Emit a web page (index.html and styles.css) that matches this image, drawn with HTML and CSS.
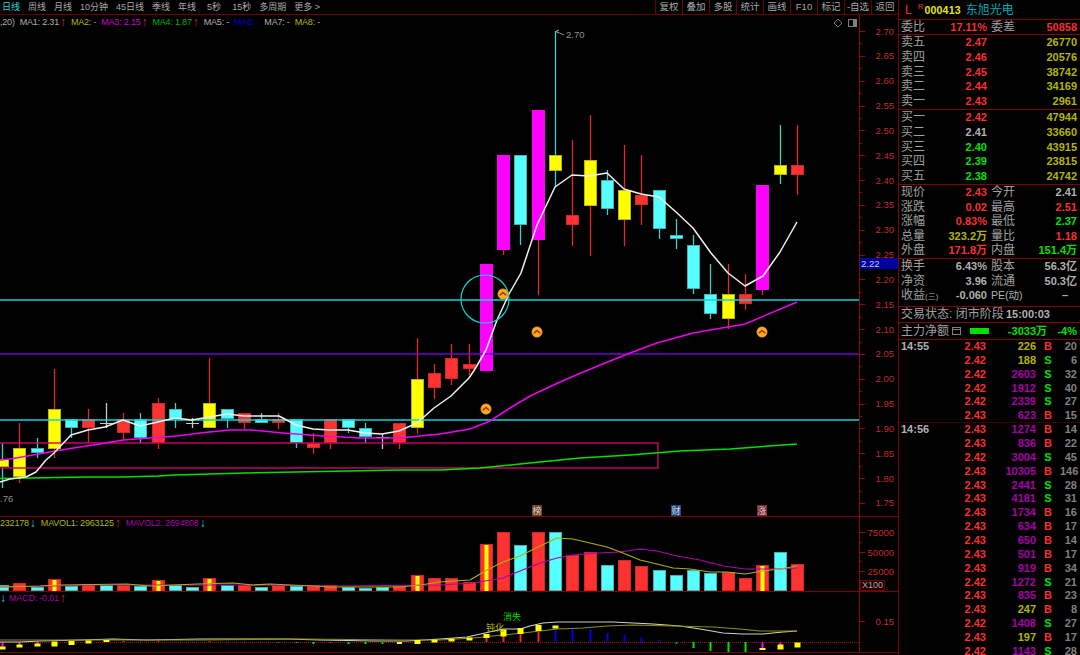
FILE: index.html
```html
<!DOCTYPE html>
<html>
<head>
    <meta charset="UTF-8">
    <title>000413 东旭光电</title>
    <link rel="stylesheet" href="styles.css">
</head>
<body>
    <div class="main">
        <div class="toolbar">
            <span class="period active">日线</span>
            <span class="period">周线</span>
            <span class="period">月线</span>
            <span class="period">10分钟</span>
            <span class="period">45日线</span>
            <span class="period">季线</span>
            <span class="period">年线</span>
            <span class="period wide">5秒</span>
            <span class="period wide">15秒</span>
            <span class="period">多周期</span>
            <span class="period">更多 &gt;</span>
            <div class="tools">
                <span class="tool">复权</span>
                <span class="tool">叠加</span>
                <span class="tool">多股</span>
                <span class="tool">统计</span>
                <span class="tool">画线</span>
                <span class="tool">F10</span>
                <span class="tool">标记</span>
                <span class="tool">-自选</span>
                <span class="tool">返回</span>
            </div>
        </div>

        <div class="pane price-pane">
            <svg id="priceChart" class="chart" width="898" height="502" viewBox="0 15 898 502"></svg>
            <div class="legend">
                <span class="gray">,20)</span>
                <span class="gray">MA1: 2.31</span><span class="up">↑</span>
                <span class="olive">MA2: -</span>
                <span class="magenta">MA3: 2.15</span><span class="up">↑</span>
                <span class="green-dim">MA4: 1.87</span><span class="up">↑</span>
                <span class="gray">MA5: -</span>
                <span class="blue">MA6: -</span>
                <span class="gray">MA7: -</span>
                <span class="olive">MA8: -</span>
            </div>
        </div>

        <div class="pane vol-pane">
            <svg id="volChart" class="chart" width="898" height="75" viewBox="0 517 898 75"></svg>
            <div class="legend">
                <span class="olive">232178</span><span class="down">↓</span>
                <span class="olive">MAVOL1: 2963125</span><span class="up">↑</span>
                <span class="purple">MAVOL2: 2694808</span><span class="down">↓</span>
            </div>
            <div class="unit-tag">X100</div>
        </div>

        <div class="pane macd-pane">
            <svg id="macdChart" class="chart" width="898" height="61" viewBox="0 592 898 61"></svg>
            <div class="legend">
                <span class="down first">↓</span>
                <span class="purple">MACD: -0.01</span><span class="up">↑</span>
            </div>
        </div>
    </div>

    <div class="panel">
        <div class="section stock-head">
            <span class="red market">L</span>
            <sup class="red rong">R</sup>
            <span class="code">000413</span>
            <span class="stock-name">东旭光电</span>
        </div>

        <div class="section ratio">
            <div class="stat"><span class="label">委比</span><b class="red">17.11%</b><span class="label second">委差</span><b class="red">50858</b></div>
        </div>

        <div class="section book">
            <div class="level"><span class="label">卖五</span><b class="red">2.47</b><b class="olive">26770</b></div>
            <div class="level"><span class="label">卖四</span><b class="red">2.46</b><b class="olive">20576</b></div>
            <div class="level"><span class="label">卖三</span><b class="red">2.45</b><b class="olive">38742</b></div>
            <div class="level"><span class="label">卖二</span><b class="red">2.44</b><b class="olive">34169</b></div>
            <div class="level"><span class="label">卖一</span><b class="red">2.43</b><b class="olive">2961</b></div>
        </div>

        <div class="section book">
            <div class="level"><span class="label">买一</span><b class="red">2.42</b><b class="olive">47944</b></div>
            <div class="level"><span class="label">买二</span><b class="gray">2.41</b><b class="olive">33660</b></div>
            <div class="level"><span class="label">买三</span><b class="green">2.40</b><b class="olive">43915</b></div>
            <div class="level"><span class="label">买四</span><b class="green">2.39</b><b class="olive">23815</b></div>
            <div class="level"><span class="label">买五</span><b class="green">2.38</b><b class="olive">24742</b></div>
        </div>

        <div class="section stats">
            <div class="stat"><span class="label">现价</span><b class="red">2.43</b><span class="label second">今开</span><b class="gray">2.41</b></div>
            <div class="stat"><span class="label">涨跌</span><b class="red">0.02</b><span class="label second">最高</span><b class="red">2.51</b></div>
            <div class="stat"><span class="label">涨幅</span><b class="red">0.83%</b><span class="label second">最低</span><b class="green">2.37</b></div>
            <div class="stat"><span class="label">总量</span><b class="olive">323.2万</b><span class="label second">量比</span><b class="red">1.18</b></div>
            <div class="stat"><span class="label">外盘</span><b class="red">171.8万</b><span class="label second">内盘</span><b class="green">151.4万</b></div>
        </div>

        <div class="section stats capital">
            <div class="stat"><span class="label">换手</span><b class="gray">6.43%</b><span class="label second">股本</span><b class="gray">56.3亿</b></div>
            <div class="stat"><span class="label">净资</span><b class="gray">3.96</b><span class="label second">流通</span><b class="gray">50.3亿</b></div>
            <div class="stat"><span class="label">收益<small>(三)</small></span><b class="gray">-0.060</b><span class="label second pe">PE(动)</span><b class="gray no-pe">–</b></div>
        </div>

        <div class="section trade-state">
            <span class="label">交易状态: 闭市阶段</span>
            <b class="gray">15:00:03</b>
        </div>

        <div class="section net-flow">
            <span class="label">主力净额</span>
            <span class="menu-icon"></span>
            <span class="flow-bar"></span>
            <b class="green flow-value">-3033万</b>
            <b class="green flow-pct">-4%</b>
        </div>

        <div class="ticks">
            <div class="tick"><b class="gray">14:55</b><b class="red">2.43</b><b class="olive">226</b><b class="red">B</b><b class="dim">20</b></div>
            <div class="tick"><b></b><b class="red">2.42</b><b class="olive">188</b><b class="green">S</b><b class="dim">6</b></div>
            <div class="tick"><b></b><b class="red">2.42</b><b class="purple">2603</b><b class="green">S</b><b class="dim">32</b></div>
            <div class="tick"><b></b><b class="red">2.42</b><b class="purple">1912</b><b class="green">S</b><b class="dim">40</b></div>
            <div class="tick"><b></b><b class="red">2.42</b><b class="purple">2339</b><b class="green">S</b><b class="dim">27</b></div>
            <div class="tick minute-end"><b></b><b class="red">2.43</b><b class="purple">623</b><b class="red">B</b><b class="dim">15</b></div>
            <div class="tick"><b class="gray">14:56</b><b class="red">2.43</b><b class="purple">1274</b><b class="red">B</b><b class="dim">14</b></div>
            <div class="tick"><b></b><b class="red">2.43</b><b class="purple">836</b><b class="red">B</b><b class="dim">22</b></div>
            <div class="tick"><b></b><b class="red">2.42</b><b class="purple">3004</b><b class="green">S</b><b class="dim">45</b></div>
            <div class="tick"><b></b><b class="red">2.43</b><b class="purple">10305</b><b class="red">B</b><b class="dim">146</b></div>
            <div class="tick"><b></b><b class="red">2.43</b><b class="purple">2441</b><b class="green">S</b><b class="dim">28</b></div>
            <div class="tick"><b></b><b class="red">2.43</b><b class="purple">4181</b><b class="green">S</b><b class="dim">31</b></div>
            <div class="tick"><b></b><b class="red">2.43</b><b class="purple">1734</b><b class="red">B</b><b class="dim">16</b></div>
            <div class="tick"><b></b><b class="red">2.43</b><b class="purple">634</b><b class="red">B</b><b class="dim">17</b></div>
            <div class="tick"><b></b><b class="red">2.43</b><b class="purple">650</b><b class="red">B</b><b class="dim">14</b></div>
            <div class="tick"><b></b><b class="red">2.43</b><b class="purple">501</b><b class="red">B</b><b class="dim">17</b></div>
            <div class="tick"><b></b><b class="red">2.43</b><b class="purple">919</b><b class="red">B</b><b class="dim">34</b></div>
            <div class="tick"><b></b><b class="red">2.42</b><b class="purple">1272</b><b class="green">S</b><b class="dim">21</b></div>
            <div class="tick"><b></b><b class="red">2.43</b><b class="purple">835</b><b class="red">B</b><b class="dim">23</b></div>
            <div class="tick"><b></b><b class="red">2.43</b><b class="olive">247</b><b class="red">B</b><b class="dim">8</b></div>
            <div class="tick"><b></b><b class="red">2.42</b><b class="purple">1408</b><b class="green">S</b><b class="dim">27</b></div>
            <div class="tick"><b></b><b class="red">2.43</b><b class="olive">197</b><b class="red">B</b><b class="dim">17</b></div>
            <div class="tick"><b></b><b class="red">2.42</b><b class="purple">1143</b><b class="green">S</b><b class="dim">28</b></div>
        </div>
    </div>

    <script src="chart.js"></script>
</body>
</html>
```

FILE: styles.css
```css
/* Page shell */
body {
    margin: 0;
    width: 1080px;
    height: 655px;
    overflow: hidden;
    display: flex;
    background-color: #000;
    color: #a8a8a8;
    font-family: "Liberation Sans", "Noto Sans CJK SC", sans-serif;
}
.main {
    width: 898px;
    flex: none;
}

/* Text colours */
.red { color: #f53030; }
.green { color: #00e000; }
.green-dim { color: #00b400; }
.gray { color: #b0b0b0; }
.dim { color: #808080; }
.olive { color: #b4b400; }
.magenta { color: #d000d0; }
.purple { color: #a800a8; }
.blue { color: #0000d8; }
.up { color: #e02828; }
.down { color: #30c8d8; }

/* Top toolbar */
.toolbar {
    height: 14px;
    display: flex;
    align-items: center;
    gap: 8px;
    padding-left: 2px;
    border-bottom: 1px solid #600000;
    font-size: 9px;
    line-height: 14px;
    white-space: nowrap;
}
.period.active { color: #30d8d8; }
.period.wide { margin-left: 3px; }
.tools {
    margin-left: auto;
    display: flex;
}
.tool {
    width: 27px;
    text-align: center;
    border-left: 1px solid #700000;
    box-sizing: border-box;
    font-size: 9.5px;
}

/* Chart panes */
.pane {
    position: relative;
    overflow: hidden;
    border-bottom: 1px solid #7a0000;
}
.price-pane { height: 501px; }
.vol-pane { height: 74px; }
.macd-pane { height: 60px; }
.chart {
    display: block;
}
.legend {
    position: absolute;
    top: 0;
    left: 0;
    display: flex;
    align-items: center;
    gap: 5px;
    font-size: 9px;
    letter-spacing: -0.2px;
    line-height: 12px;
    white-space: nowrap;
}
.price-pane .legend { top: 1px; }
.legend .up,
.legend .down {
    width: 6px;
    margin-left: -4px;
    display: flex;
    justify-content: center;
    font-size: 12px;
    letter-spacing: 0;
}
.legend .first { margin: 0 -2px 0 0; }
.unit-tag {
    position: absolute;
    left: 860px;
    top: 63px;
    width: 25px;
    height: 11px;
    box-sizing: border-box;
    border: 1px solid #700000;
    background-color: #200000;
    color: #a8a8a8;
    font-size: 9px;
    line-height: 9px;
    text-align: center;
}

/* Right panel */
.panel {
    flex: none;
    width: 181px;
    border-left: 1px solid #800000;
    font-size: 12px;
    line-height: 14px;
}
.panel b {
    font-size: 11px;
    white-space: nowrap;
}
.section {
    padding: 0 3px 0 2px;
    border-bottom: 1px solid #800000;
    box-sizing: border-box;
}
.label {
    color: #a0a0a0;
    white-space: nowrap;
}
.stock-head {
    height: 20px;
    display: flex;
    align-items: center;
    padding-left: 6px;
}
.market { font-size: 12px; }
.rong {
    margin-left: 6px;
    font-size: 8px;
    line-height: 8px;
    align-self: flex-start;
    margin-top: 3px;
}
.code {
    margin-left: 1px;
    color: #e8e800;
    font-size: 10.5px;
    font-weight: bold;
    letter-spacing: 0.2px;
}
.stock-name {
    margin-left: 5px;
    color: #00a8b8;
    font-size: 12px;
}
.ratio { height: 15px; }
.book { height: 75px; }
.level {
    height: 14.8px;
    display: grid;
    grid-template-columns: 40px 46px 90px;
    line-height: 14.8px;
    text-align: right;
}
.level .label { text-align: left; }
.stats { height: 74px; }
.stats.capital { height: 48px; }
.stat {
    height: 14.6px;
    display: grid;
    grid-template-columns: 30px 56px 34px 56px;
    line-height: 14.6px;
    text-align: right;
}
.ratio .stat { line-height: 14px; }
.stat .label { text-align: left; }
.stat .second { padding-left: 4px; }
.stat small { font-size: 8px; }
.stat .pe { font-size: 10.5px; color: #b0b0b0; }
.stat .no-pe { padding-right: 9px; }
.trade-state {
    height: 16px;
    display: flex;
    justify-content: space-between;
    padding-right: 30px;
    line-height: 15px;
}
.net-flow {
    height: 17px;
    display: flex;
    align-items: center;
}
.menu-icon {
    width: 7px;
    height: 6px;
    margin-left: 3px;
    border: 1px solid #808080;
    background: linear-gradient(#000 1px, #808080 1px, #808080 2px, #000 2px);
}
.flow-bar {
    width: 19px;
    height: 6px;
    margin-left: 9px;
    background-color: #00e000;
}
.flow-value {
    margin-left: auto;
    margin-right: 30px;
}
.flow-pct {
    position: absolute;
    right: 3px;
}

/* Tick list */
.tick {
    height: 13.86px;
    box-sizing: border-box;
    padding-left: 2px;
    display: grid;
    grid-template-columns: 40px 45px 50px 24px 17px;
    line-height: 13.8px;
    text-align: right;
}
.tick b:first-child { text-align: left; }
.tick b:nth-child(4) { text-align: center; }
.minute-end { border-bottom: 1px dotted #700000; }
```

FILE: chart.js
```js
// Draws the kline, volume and MACD panes as SVG from hand-read data.
// All coordinates are page pixels, each svg has a matching viewBox.

const NS = 'http://www.w3.org/2000/svg';

const RED = '#ff3232', CYAN = '#55ffff', YELLOW = '#ffff00', MAGENTA = '#ff00ff';
const AXIS = '#8a0a0a', AXIS_TEXT = '#c02c2c';

const bodyStyle = {
    r: { fill: RED, edge: '#d02828', wick: '#e02828' },
    c: { fill: CYAN, edge: '#40b0b0', wick: '#38d0d0' },
    y: { fill: YELLOW, edge: '#b8b800', wick: '#e02828' },
    Y: { fill: YELLOW, edge: '#b8b800', wick: '#38d0d0' },
    m: { fill: MAGENTA, edge: MAGENTA, wick: '#e02828' },
    g: { fill: '#c8c8c8', edge: '#c8c8c8', wick: '#c8c8c8' }
};

// type, body top, body bottom, wick top, wick bottom
const candles = [
    ['Y', 459, 467, 443, 488], ['y', 448, 477, 423, 483], ['c', 448, 453, 438, 458],
    ['y', 409, 449, 369, 458], ['c', 419, 428, 419, 438], ['r', 419, 428, 409, 443],
    ['g', 423, 423, 403, 428], ['r', 419, 433, 413, 439], ['c', 419, 438, 413, 443],
    ['r', 403, 443, 398, 449], ['c', 409, 419, 403, 428], ['g', 423, 423, 418, 428],
    ['y', 403, 428, 358, 428], ['c', 409, 419, 409, 428], ['r', 413, 423, 413, 429],
    ['c', 419, 423, 413, 423], ['r', 419, 423, 413, 429], ['c', 419, 443, 419, 448],
    ['r', 443, 448, 433, 454], ['r', 419, 443, 419, 449], ['c', 419, 428, 419, 433],
    ['c', 428, 437, 423, 443], ['g', 437, 437, 434, 449], ['r', 423, 443, 423, 449],
    ['y', 379, 428, 338, 434], ['r', 373, 388, 364, 399], ['r', 358, 379, 344, 385],
    ['r', 364, 369, 344, 375], ['m', 264, 371, 264, 371], ['m', 155, 250, 155, 255],
    ['c', 155, 225, 155, 245], ['m', 110, 240, 110, 295], ['Y', 155, 171, 31, 187],
    ['r', 215, 225, 140, 246], ['y', 160, 206, 115, 256], ['c', 180, 209, 170, 215],
    ['y', 190, 220, 145, 246], ['r', 195, 205, 155, 225], ['c', 190, 229, 190, 239],
    ['c', 235, 239, 219, 249], ['c', 245, 289, 235, 294], ['c', 294, 314, 264, 319],
    ['y', 294, 319, 264, 329], ['r', 294, 304, 274, 310], ['m', 185, 290, 185, 295],
    ['Y', 165, 175, 125, 184], ['r', 165, 175, 125, 195]
];

// r red, c cyan, x red with a yellow core
const volumes = [
    ['c', 585], ['r', 583], ['c', 587], ['x', 579], ['c', 586], ['r', 584], ['c', 585], ['r', 585],
    ['c', 586], ['x', 580], ['c', 585], ['c', 587], ['x', 578], ['c', 585], ['r', 585], ['c', 587],
    ['r', 585], ['c', 586], ['r', 585], ['r', 585], ['c', 587], ['c', 588], ['c', 587], ['r', 586],
    ['x', 575], ['r', 578], ['r', 578], ['r', 582], ['x', 544], ['r', 532], ['c', 545], ['r', 532],
    ['c', 532], ['r', 555], ['r', 552], ['c', 565], ['r', 560], ['r', 566], ['c', 570], ['c', 575],
    ['c', 570], ['c', 573], ['r', 572], ['r', 578], ['x', 565], ['c', 552], ['r', 564]
];

const ma1 = '0,482 10,479 26,477 36,472 46,460 54,453 71,435 88,430 105,427 123,420 140,426 158,422 175,418 192,420 209,417 227,414 244,416 262,416 279,416 296,425 313,429 330,430 348,430 365,433 382,434 399,431 417,423 434,408 451,396 469,378 475,369 486,350 497,320 509,294 521,273 537,225 555,187 572,175 589,176 607,173 624,189 641,194 659,197 676,212 693,228 711,253 728,273 745,286 763,276 780,252 797,222';
const ma3 = '0,460 10,459 33,455 67,449 100,444 123,440 150,438 177,436 200,433 230,430 250,430 283,433 323,436 360,438 400,438 440,434 470,429 490,421 510,408 530,396 560,382 588,370 630,353 657,343 693,333 745,324 797,302';
const ma4 = '0,478.5 88,477 123,477 158,476 175,475 210,474 245,473 295,472 348,471 400,470 440,470 480,468 530,463 580,458 630,455 680,451 730,449 797,444';

const mavol1 = '0,587 40,586 60,585 127,584 150,586 197,584 233,583 253,585 270,584 333,587 400,587 420,585 440,582 470,580 487,570 503,562 520,556 538,547 557,538 573,539 607,547 623,553 640,560 657,564 673,568 690,569 710,572 727,572 745,574 763,571 780,569 797,566';
const mavol2 = '0,587 100,585 167,585 253,585 333,586 440,585 473,583 503,578 520,571 540,563 557,558 573,555 597,553 620,552 640,549 657,551 677,556 700,560 723,566 745,569 763,569 780,569 797,568';

const dif = '0,642 10,642 20,642 40,641 80,640 113,639 147,640 200,639 253,639 287,639 320,640 373,641 407,641 440,639 467,637 503,629 520,629 530,626 543,623 557,622 580,622 613,622 653,624 680,626 700,629 723,633 743,634 763,634 783,632 797,631';
const dea = '0,640 60,640 120,640 200,640 300,639 400,640 440,640 473,638 503,635 523,633 540,631 557,629 583,628 607,626 633,625 673,626 713,627 740,629 760,631 797,631';

// x index, top, bottom, colour of the MACD histogram
const macdBars = [
    [0, 642, 647, '#ff00ff'], [1, 642, 645, '#ff00ff'], [2, 642, 644, '#ff00ff'],
    [7, 641, 642, '#dc2a2a'], [8, 641, 642, '#0000e0'], [9, 641, 642, '#dc2a2a'], [10, 641, 642, '#0000e0'],
    [11, 641, 642, '#0000e0'], [12, 641, 642, '#dc2a2a'], [13, 641, 642, '#0000e0'], [14, 641, 642, '#0000e0'],
    [15, 641, 642, '#0000e0'], [16, 642, 643, '#00b400'], [17, 642, 643, '#00e600'], [18, 642, 644, '#00e600'],
    [19, 642, 643, '#ff00ff'], [20, 642, 644, '#00e600'], [21, 642, 644, '#00e600'], [22, 642, 644, '#00e600'],
    [28, 638, 642, '#ff2020'], [29, 635, 642, '#ff2020'], [30, 633, 642, '#ff2020'], [31, 632, 642, '#ff2020'],
    [32, 628, 642, '#0000e0'], [33, 628, 642, '#0000e0'], [34, 629, 642, '#0000e0'], [35, 633, 642, '#0000e0'],
    [36, 635, 642, '#0000e0'], [37, 637, 642, '#0000e0'], [38, 640, 642, '#0000e0'], [39, 642, 644, '#00b400'],
    [40, 642, 648, '#00e600'], [41, 642, 651, '#00e600'], [42, 642, 652, '#00e600'], [43, 642, 653, '#00e600'],
    [44, 642, 648, '#ff00ff'], [45, 642, 645, '#ff00ff']
];

// x index, centre y, width, height of the yellow markers
const macdMarks = [
    [0, 648, 6, 3], [1, 646, 6, 3], [2, 645, 6, 3], [3, 644, 6, 5], [4, 643, 6, 4], [5, 642, 6, 3], [6, 641, 6, 2],
    [23, 643, 5, 2], [24, 642, 6, 4], [25, 641, 6, 3],
    [26, 640, 6, 3], [27, 639, 6, 3], [28, 636, 6, 4], [29, 633, 6, 7], [30, 631, 6, 6], [31, 628, 6, 6], [32, 627, 6, 3],
    [44, 649, 6, 2], [45, 647, 6, 5], [46, 645, 6, 5]
];

function el(parent, name, attrs, text) {
    const node = document.createElementNS(NS, name);
    for (const key in attrs) node.setAttribute(key, attrs[key]);
    if (text) node.textContent = text;
    parent.appendChild(node);
    return node;
}

function slotX(i) {
    return Math.round(2 + i * 17.28);
}

function polyline(svg, points, color, width) {
    el(svg, 'polyline', { points: points, fill: 'none', stroke: color, 'stroke-width': width || 1, 'stroke-linejoin': 'round' });
}

function hline(svg, y, x1, x2, color, width) {
    el(svg, 'line', { x1: x1, x2: x2, y1: y, y2: y, stroke: color, 'stroke-width': width || 1 });
}

function axisLine(svg, top, bottom) {
    el(svg, 'line', { x1: 859.5, x2: 859.5, y1: top, y2: bottom, stroke: AXIS });
}

function axisLabel(svg, y, text) {
    hline(svg, Math.round(y) + 0.5, 860, 865, AXIS);
    el(svg, 'text', { x: 894, y: y + 3.5, 'text-anchor': 'end', fill: AXIS_TEXT, 'font-size': 9.5 }, text);
}

function drawCandle(svg, c, i) {
    const [type, top, bottom, wickTop, wickBottom] = c;
    const x = slotX(i);
    const s = bodyStyle[type];
    if (wickBottom > wickTop) {
        el(svg, 'line', { x1: x + 0.5, x2: x + 0.5, y1: wickTop, y2: wickBottom, stroke: s.wick, 'stroke-width': 1.3 });
    }
    if (bottom === top) {
        hline(svg, top + 0.5, x - 6, x + 7, s.fill);
    } else {
        el(svg, 'rect', { x: x - 5.5, y: top + 0.5, width: 12, height: bottom - top - 1, fill: s.fill, stroke: s.edge });
    }
}

function signalIcon(svg, x, y) {
    el(svg, 'circle', { cx: x, cy: y, r: 5.2, fill: '#f4ae20', stroke: '#d89018', 'stroke-width': 0.6 });
    el(svg, 'polyline', { points: (x - 3.2) + ',' + (y + 1.2) + ' ' + x + ',' + (y - 1.6) + ' ' + (x + 3.2) + ',' + (y + 1.2), fill: 'none', stroke: '#c01818', 'stroke-width': 1.4 });
}

function drawPrice(svg) {
    axisLine(svg, 15, 517);
    for (let k = 0; k < 20; k++) {
        const y = 31 + k * 24.84;
        axisLabel(svg, y, (2.7 - k * 0.05).toFixed(2));
        if (k < 19) hline(svg, Math.round(y + 12.42) + 0.5, 860, 862, AXIS);
    }
    el(svg, 'rect', { x: 860, y: 258, width: 38, height: 11, fill: '#0000a0' });
    el(svg, 'text', { x: 861, y: 267, fill: '#c8c8e8', 'font-size': 9.5 }, '2.22');

    candles.forEach((c, i) => drawCandle(svg, c, i));

    hline(svg, 300, 0, 859, '#10d4d4', 1.4);
    hline(svg, 420, 0, 859, '#10d4d4', 1.4);
    hline(svg, 354, 0, 859, '#7000d0', 1.6);
    el(svg, 'rect', { x: -2, y: 443, width: 660, height: 25, fill: 'none', stroke: '#d0006e', 'stroke-width': 1.4 });

    polyline(svg, ma4, '#00e000', 1.5);
    polyline(svg, ma3, '#f000f0', 1.5);
    polyline(svg, ma1, '#f0f0f0', 1.5);

    el(svg, 'circle', { cx: 485, cy: 299, r: 24, fill: 'none', stroke: '#10d4d4', 'stroke-width': 1.2 });
    signalIcon(svg, 503, 294);
    signalIcon(svg, 486, 409);
    signalIcon(svg, 537, 332);
    signalIcon(svg, 762, 332);

    // high label and its pointer
    polyline(svg, '564,35 556,31.5 559,30 556,31.5 558,33', '#909090');
    el(svg, 'text', { x: 566, y: 38, fill: '#909090', 'font-size': 9.5 }, '2.70');
    el(svg, 'text', { x: 0, y: 502, fill: '#909090', 'font-size': 9.5 }, '.76');

    // event badges
    [[537, '#70401c', '榜'], [676, '#1c4c88', '财'], [762, '#7c1c2c', '涨']].forEach(b => {
        el(svg, 'rect', { x: b[0] - 5, y: 505, width: 10, height: 11, fill: b[1] });
        el(svg, 'text', { x: b[0], y: 514, fill: '#d8d8d8', 'font-size': 9, 'text-anchor': 'middle' }, b[2]);
    });

    // window buttons
    el(svg, 'path', { d: 'M838 19 L842 23 L838 27 L834 23 Z', fill: 'none', stroke: '#707070' });
    el(svg, 'rect', { x: 848.5, y: 19.5, width: 8, height: 7, fill: 'none', stroke: '#808080' });
    el(svg, 'rect', { x: 853, y: 20, width: 3, height: 6, fill: '#808080' });
}

function drawVolume(svg) {
    axisLine(svg, 517, 592);
    axisLabel(svg, 532, '75000');
    axisLabel(svg, 552, '50000');
    axisLabel(svg, 571, '25000');
    hline(svg, 542.5, 860, 862, AXIS);
    hline(svg, 561.5, 860, 862, AXIS);

    volumes.forEach((v, i) => {
        const x = slotX(i);
        const isCyan = v[0] === 'c';
        el(svg, 'rect', { x: x - 5.5, y: v[1] + 0.5, width: 12, height: 590 - v[1], fill: isCyan ? CYAN : RED, stroke: isCyan ? '#40b0b0' : '#d02828' });
        if (v[0] === 'x') el(svg, 'rect', { x: x - 1.5, y: v[1] + 1, width: 4, height: 590 - v[1], fill: YELLOW });
    });
    polyline(svg, mavol2, '#b000b0', 1.2);
    polyline(svg, mavol1, '#b0b000', 1.2);
}

function drawMacd(svg) {
    axisLine(svg, 592, 653);
    axisLabel(svg, 621, '0.15');
    el(svg, 'line', { x1: 0, x2: 859, y1: 642.5, y2: 642.5, stroke: '#a01010', 'stroke-dasharray': '1 1' });

    macdBars.forEach(b => {
        const x = slotX(b[0]);
        el(svg, 'rect', { x: x - 0.5, y: b[1], width: 2, height: b[2] - b[1], fill: b[3] });
    });
    polyline(svg, dif, '#d0d0d0', 1.2);
    polyline(svg, dea, '#909000', 1.2);
    macdMarks.forEach(m => {
        const x = slotX(m[0]);
        el(svg, 'rect', { x: x + 0.5 - m[2] / 2, y: m[1] - m[3] / 2, width: m[2], height: m[3], fill: YELLOW });
    });

    el(svg, 'text', { x: 503, y: 620, fill: '#00d800', 'font-size': 9 }, '消失');
    el(svg, 'text', { x: 486, y: 631, fill: '#b8b800', 'font-size': 9 }, '钝化');
}

drawPrice(document.getElementById('priceChart'));
drawVolume(document.getElementById('volChart'));
drawMacd(document.getElementById('macdChart'));
```
